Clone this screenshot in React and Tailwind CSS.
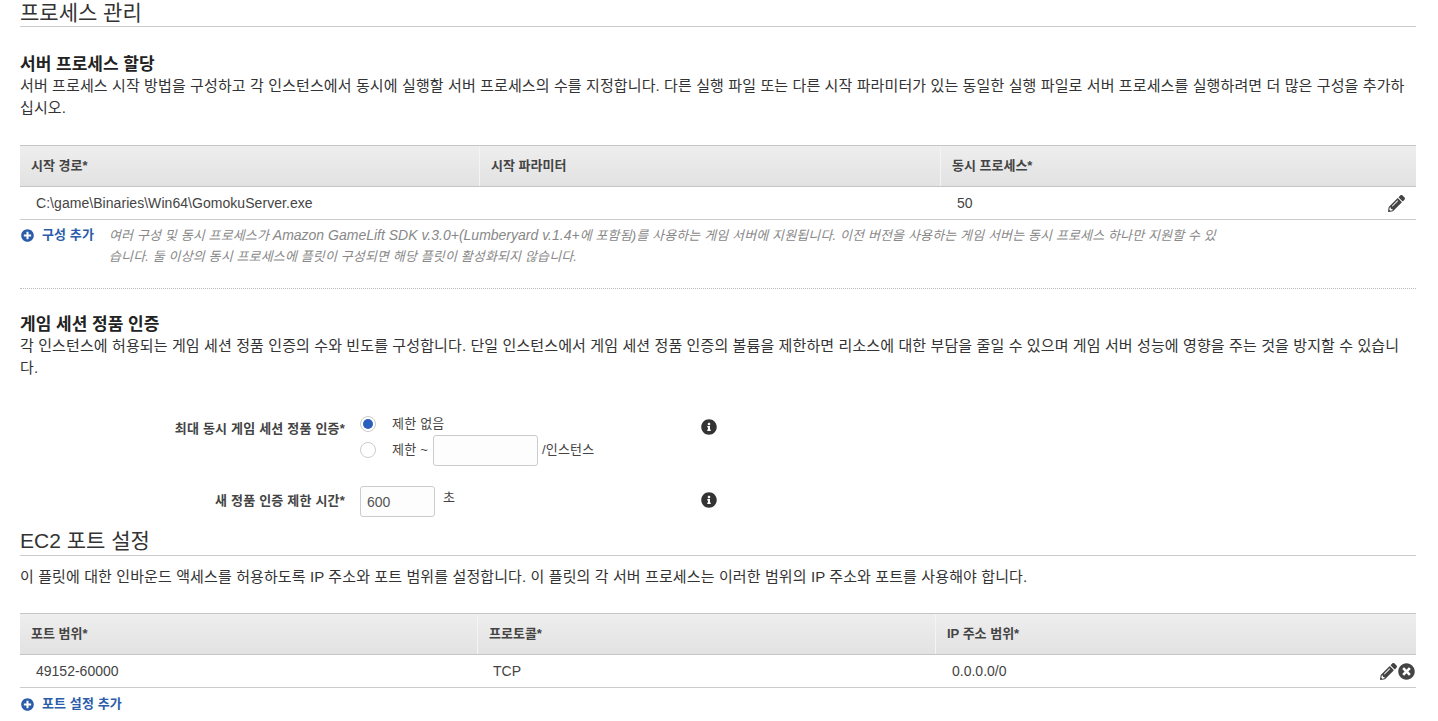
import React from 'react';
import { FaPencilAlt, FaInfoCircle, FaTimesCircle, FaPlusCircle } from 'react-icons/fa';

const TableHead = ({ cols, grid }) => (
  <div className={`grid ${grid} h-[42px] border-y border-[#c6c6c6] bg-gradient-to-b from-[#eeeeee] to-[#e2e2e2] text-[13px] font-bold text-[#444444]`}>
    {cols.map((c, i) => (
      <div key={c} className={`flex items-center pl-[11px] ${i > 0 ? 'border-l border-[#f4f4f4]' : ''}`}>{c}</div>
    ))}
  </div>
);

const AddLink = ({ children }) => (
  <a className="flex items-center gap-2 whitespace-nowrap text-[13px] font-bold tracking-[0.1px] text-[#2a5caa]">
    <FaPlusCircle className="h-[13px] w-[13px] ml-px" />
    {children}
  </a>
);

export default function App() {
  return (
    <div className="h-[721px] overflow-hidden bg-white pl-5 pr-[22px] font-['Liberation_Sans','Noto_Sans_CJK_KR',sans-serif] text-sm text-[#444444]">
      <h2 className="h-[27px] border-b border-[#cccccc] text-[21px] leading-[25px] text-[#333333]">프로세스 관리</h2>

      <h3 className="mt-[28px] text-[17px] font-bold leading-5 text-[#222222]">서버 프로세스 할당</h3>
      <p className="text-[15px] leading-[22px] tracking-[0.11px] text-[#333333]">
        서버 프로세스 시작 방법을 구성하고 각 인스턴스에서 동시에 실행할 서버 프로세스의 수를 지정합니다. 다른 실행 파일 또는 다른 시작 파라미터가 있는 동일한 실행 파일로 서버 프로세스를 실행하려면 더 많은 구성을 추가하<br />십시오.
      </p>

      <div className="mt-[26px]">
        <TableHead grid="grid-cols-[459px_461px_476px]" cols={['시작 경로*', '시작 파라미터', '동시 프로세스*']} />
        <div className="grid h-[33px] grid-cols-[459px_461px_476px] items-center border-b border-[#cccccc] text-[14px] tracking-[0.05px] text-[#444444]">
          <div className="pl-4">C:\game\Binaries\Win64\GomokuServer.exe</div>
          <div />
          <div className="flex items-center justify-between pl-[17px] pr-[11px]">
            <span>50</span>
            <FaPencilAlt className="h-[17px] w-[17px] text-[#444444]" />
          </div>
        </div>
      </div>

      <div className="mt-[5px] flex items-start">
        <div className="w-[89px] pt-[1px]"><AddLink>구성 추가</AddLink></div>
        <p className="w-[1130px] text-[13px] italic leading-[21px] tracking-[0.13px] text-[#888888]">
          여러 구성 및 동시 프로세스가 <span className="text-[14px] leading-[20px] tracking-normal">Amazon GameLift SDK v.3.0+(Lumberyard v.1.4+</span>에 포함됨)를 사용하는 게임 서버에 지원됩니다. 이전 버전을 사용하는 게임 서버는 동시 프로세스 하나만 지원할 수 있<br />습니다. 둘 이상의 동시 프로세스에 플릿이 구성되면 해당 플릿이 활성화되지 않습니다.
        </p>
      </div>

      <div className="mt-[21px] border-t border-dotted border-[#bbbbbb]" />

      <h3 className="mt-[26px] text-[17px] font-bold leading-5 text-[#222222]">게임 세션 정품 인증</h3>
      <p className="text-[15px] leading-[22px] tracking-[0.11px] text-[#333333]">
        각 인스턴스에 허용되는 게임 세션 정품 인증의 수와 빈도를 구성합니다. 단일 인스턴스에서 게임 세션 정품 인증의 볼륨을 제한하면 리소스에 대한 부담을 줄일 수 있으며 게임 서버 성능에 영향을 주는 것을 방지할 수 있습니<br />다.
      </p>

      <div className="mt-[34px] flex items-start">
        <div className="w-[325px] pt-[7px] text-right text-[13px] font-bold tracking-[0.2px] text-[#444444]">최대 동시 게임 세션 정품 인증*</div>
        <div className="ml-[15px] w-[341px] text-[13px] tracking-[0.2px]">
          <div className="flex h-[22px] items-center">
            <span className="flex h-4 w-4 items-center justify-center rounded-full border border-[#cccccc] bg-white">
              <span className="h-[10px] w-[10px] rounded-full bg-[#2a5fbd]" />
            </span>
            <span className="ml-[16px]">제한 없음</span>
          </div>
          <div className="flex h-[30px] items-center">
            <span className="h-4 w-4 rounded-full border border-[#cccccc] bg-white" />
            <span className="ml-[16px]">제한 ~</span>
            <span className="ml-[5px] h-[31px] w-[105px] rounded-[3px] border border-[#cccccc] bg-[#fdfdfd]" />
            <span className="ml-[4px]">/인스턴스</span>
          </div>
        </div>
        <FaInfoCircle className="mt-[6px] h-4 w-4 text-[#333333]" />
      </div>

      <div className="mt-[21px] flex items-start">
        <div className="w-[325px] pt-[6px] text-right text-[13px] font-bold tracking-[0.2px] text-[#444444]">새 정품 인증 제한 시간*</div>
        <div className="ml-[15px] flex w-[341px] items-start text-[13px]">
          <span className="flex h-[31px] w-[75px] items-center rounded-[3px] border border-[#cccccc] bg-[#fdfdfd] pl-[6px] text-[14px] text-[#555555]">600</span>
          <span className="ml-[8px] mt-[3px]">초</span>
        </div>
        <FaInfoCircle className="mt-[6px] h-4 w-4 text-[#333333]" />
      </div>

      <h2 className="mt-[7px] h-[32px] border-b border-[#cccccc] text-[21px] leading-[33px] text-[#333333]">EC2 포트 설정</h2>
      <p className="mt-[10px] text-[15px] leading-[22px] tracking-[0.11px] text-[#333333]">
        이 플릿에 대한 인바운드 액세스를 허용하도록 IP 주소와 포트 범위를 설정합니다. 이 플릿의 각 서버 프로세스는 이러한 범위의 IP 주소와 포트를 사용해야 합니다.
      </p>

      <div className="mt-[25px]">
        <TableHead grid="grid-cols-[457px_458px_481px]" cols={['포트 범위*', '프로토콜*', 'IP 주소 범위*']} />
        <div className="grid h-[33px] grid-cols-[457px_458px_481px] items-center border-b border-[#cccccc] text-[14px] text-[#444444]">
          <div className="pl-4">49152-60000</div>
          <div className="pl-4">TCP</div>
          <div className="flex items-center justify-between pl-[17px] pr-px">
            <span>0.0.0.0/0</span>
            <span className="flex items-center gap-px">
              <FaPencilAlt className="h-[17px] w-[17px]" />
              <FaTimesCircle className="h-[17px] w-[17px]" />
            </span>
          </div>
        </div>
      </div>

      <div className="mt-[7px]"><AddLink>포트 설정 추가</AddLink></div>
    </div>
  );
}
